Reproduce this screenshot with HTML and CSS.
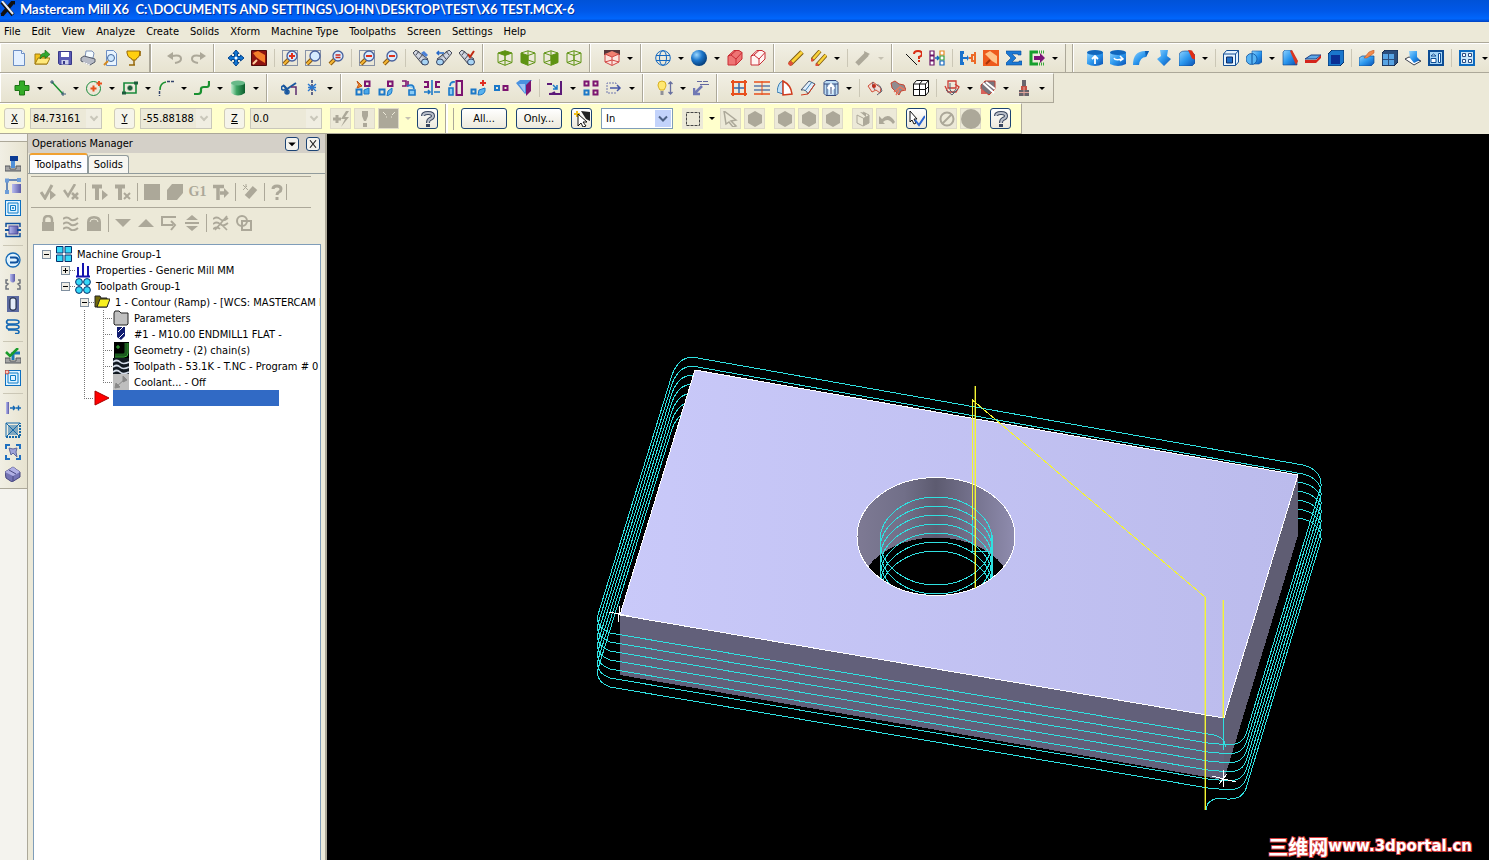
FILE: index.html
```html
<!DOCTYPE html>
<html lang="en">
  <head>
    <meta charset="utf-8">
    <title>Mastercam Mill X6</title>
    <link rel="stylesheet" href="styles.css">
  </head>
  <body>
    <!-- shared gradients and icon parts -->
    <svg class="sprite" aria-hidden="true">
      <defs>
        <linearGradient id="blue" x1="0" y1="0" x2="1" y2="1"><stop offset="0" stop-color="#8fd3ff"/><stop offset=".5" stop-color="#2b97ee"/><stop offset="1" stop-color="#0a4fb0"/></linearGradient>
        <linearGradient id="green" x1="0" x2="1"><stop offset="0" stop-color="#c4ecd0"/><stop offset=".4" stop-color="#3fa565"/><stop offset="1" stop-color="#0c5c2c"/></linearGradient>
        <linearGradient id="violet" x1="0" x2="1"><stop offset="0" stop-color="#b9bcf0"/><stop offset="1" stop-color="#5a5aa8"/></linearGradient>
        <linearGradient id="steel" x1="0" y1="1" x2="1" y2="0"><stop offset="0" stop-color="#5a6070"/><stop offset=".5" stop-color="#d8dde8"/><stop offset="1" stop-color="#4a5060"/></linearGradient>
        <radialGradient id="ball" cx=".35" cy=".3" r=".7"><stop offset="0" stop-color="#9cd8ff"/><stop offset=".5" stop-color="#1d77cc"/><stop offset="1" stop-color="#06407e"/></radialGradient>
        <linearGradient id="top" x1="0" x2="1"><stop offset="0" stop-color="#c9c9f9"/><stop offset="1" stop-color="#bbbbec"/></linearGradient>
        <linearGradient id="wall" x1="0" x2="1"><stop offset="0" stop-color="#7e7a94"/><stop offset=".3" stop-color="#716f88"/><stop offset=".5" stop-color="#5d5b70"/><stop offset="1" stop-color="#8f8cae"/></linearGradient>
      </defs>
      <symbol id="mag" viewBox="0 0 16 16"><path d="M7 9 2 14" stroke="#8a5a10" stroke-width="4"/><path d="M7 9 2 14" stroke="#f7b733" stroke-width="2"/><circle cx="10" cy="6" r="5" fill="#d6ebff" stroke="#48609c" stroke-width="1.300"/></symbol>
      <symbol id="dots" viewBox="0 0 16 16"><path d="M.5.5h15v15H.5z" stroke="#223a70" stroke-dasharray="1 1"/></symbol>
      <symbol id="bino" viewBox="0 0 16 16"><path d="m0 3 3-3 12 9-5 6z" fill="url(#steel)" stroke="#474b58"/><path d="m3 5 3-4M6 9l4-5" stroke="#474b58"/><ellipse cx="12" cy="12" rx="3.500" ry="3" fill="#a8d4f4" stroke="#354464"/></symbol>
      <symbol id="wire" viewBox="0 0 16 16"><path d="M8 .8 15 3v9.500L8 15.300 1 12.500V3zM1 3l7 2.500L15 3M8 5.500v9.800M1 12.500 8 10l7 2.500M8 .8V10" stroke="#5e9313"/></symbol>
      <symbol id="cyl" viewBox="0 0 16 16"><path d="M0 2h16v12q-8 4-16 0z" fill="url(#blue)"/><ellipse cx="8" cy="2.500" rx="8" ry="2.500" fill="#1167bd"/></symbol>
      <symbol id="sq" viewBox="0 0 16 16"><path d="M1.500 9.500h5v5h-5z" stroke="#1b78c8" stroke-width="2"/><path d="M10 1.500h4.500V6H10z" stroke="#7c1470" stroke-width="2"/></symbol>
      <symbol id="hex" viewBox="0 0 16 16"><path d="m8 0 7 4v8l-7 4-7-4V4z" fill="#aca899"/></symbol>
      <symbol id="help" viewBox="0 0 16 16"><path d="M3 5Q3 2 8 2t5 3q0 2-3 3-2 1-2 4" stroke="#39465f" stroke-width="4"/><path d="M3 5Q3 2 8 2t5 3q0 2-3 3-2 1-2 4" stroke="#b9bfca" stroke-width="2"/><path d="M6 13h4v3H6z" fill="#39465f"/></symbol>
      <symbol id="base" viewBox="0 0 16 16"><path d="M0 10h5v3h6v-3h5v5H0z" fill="#a5a5a5" stroke="#55585e"/></symbol>
      <symbol id="page" viewBox="0 0 16 16"><rect x=".5" y=".5" width="15" height="15" fill="#dff2ff" stroke="#0c6fc0"/></symbol>
    </svg>

    <div class="app">
      <header class="titlebar">
        <svg viewBox="0 0 16 16"><path d="m2 1 11 13M13 1 2 14" stroke="#111" stroke-width="4"/><path d="m2 0 11 13" stroke="#e8edf4" stroke-width="2"/><path d="M11 0h4v4zM1 12v3h3z" fill="#111"/></svg>
        <h1>Mastercam Mill X6&nbsp; C:\DOCUMENTS AND SETTINGS\JOHN\DESKTOP\TEST\X6 TEST.MCX-6</h1>
      </header>

      <nav class="menubar">
        <button>File</button>
        <button>Edit</button>
        <button>View</button>
        <button>Analyze</button>
        <button>Create</button>
        <button>Solids</button>
        <button>Xform</button>
        <button>Machine Type</button>
        <button>Toolpaths</button>
        <button>Screen</button>
        <button>Settings</button>
        <button>Help</button>
      </nav>

      <div class="bar full">
        <div class="group first">
          <button aria-label="New"><svg viewBox="0 0 16 16"><path d="M2.500.5h8l3 3v12h-11z" fill="#e4f0ff" stroke="#6c8ec4"/><path d="M10.500.5v3h3" fill="#fff" stroke="#6c8ec4"/></svg></button>
          <button aria-label="Open"><svg viewBox="0 0 16 16"><path d="M1 14V4h5l1 2h6v8z" fill="#f2c21c" stroke="#a07b10"/><path d="m1 14 3-6h12l-3 6z" fill="#ffe97a" stroke="#a07b10"/><path d="M6 9q0-6 5-6V0l5 4.500-5 4V6Q8 6 6 9z" fill="#2fa82f" stroke="#126512" stroke-width=".6"/></svg></button>
          <button aria-label="Save"><svg viewBox="0 0 16 16"><path d="M1.500 1.500h13v13h-12l-1-1z" fill="#5a5ab4" stroke="#383888"/><path d="M4 2h8v5H4z" fill="#fff"/><path d="M4.500 10h7v4.500h-7z" fill="#cfd3ea"/><path d="M6 11h2v3H6z" fill="#383888"/></svg></button>
          <button aria-label="Print"><svg viewBox="0 0 16 16"><path d="m5 8 1-7h6l2 2-1 5z" fill="#f4fbff" stroke="#7d92b8"/><path d="m1 8 3-2 11 3v3l-5 3-9-4z" fill="#b7bbc6" stroke="#555b6a"/><path d="m3 12 7 3" stroke="#fff"/></svg></button>
          <button aria-label="Print preview"><svg viewBox="0 0 16 16"><path d="M3.500.5h7l3 3v12h-10z" fill="#e8f4ff" stroke="#6c8ec4"/><path d="m5 11-4 4" stroke="#d58a20" stroke-width="2"/><circle cx="8" cy="8" r="3.500" fill="#cfe8ff" stroke="#44689c"/></svg></button>
          <button aria-label="Fast track"><svg viewBox="0 0 16 16"><path d="M1 1h13v2q0 4-4 6v1H6V9Q1 7 1 3z" fill="#ffcf10" stroke="#96680a"/><path d="M8 10v5M3 15h6M14 1v5" stroke="#96680a" stroke-width="1.500"/></svg></button>
        </div>
        <div class="group double">
          <button disabled aria-label="Undo"><svg viewBox="0 0 16 16"><path d="m0 6 6-4v8z" fill="#aca899"/><path d="M5 6q9-2 9 3 0 3-6 4" stroke="#aca899" stroke-width="2"/></svg></button>
          <button disabled aria-label="Redo"><svg viewBox="0 0 16 16"><path d="m16 6-6-4v8z" fill="#aca899"/><path d="M11 6Q2 4 2 9q0 3 6 4" stroke="#aca899" stroke-width="2"/></svg></button>
        </div>
        <div class="group">
          <button aria-label="Pan"><svg viewBox="0 0 16 16"><path d="m8 0 3 3.500H9.500V6.500h3V5L16 8l-3.500 3V9.500h-3v3H11L8 16l-3-3.500h1.500v-3h-3V11L0 8l3.500-3v1.500h3v-3H5z" fill="#1176d4" stroke="#06458c" stroke-width="1"/><circle cx="8" cy="8" r="1.500" fill="#fff"/></svg></button>
          <button aria-label="Repaint"><svg viewBox="0 0 16 16"><path d="M.5.5h15v15H.5z" fill="#8f1410" stroke="#4f0c0a"/><path d="m2 3 5-2 7 4v8l-5-3-4-3z" fill="#f47f2c"/><path d="m2 14 4-4" stroke="#ffd0a0" stroke-width="2"/></svg></button>
          <span class="sep"></span>
          <button aria-label="Zoom window"><svg viewBox="0 0 16 16"><use href="#dots"/><use href="#mag"/><path d="M10 3v6M7 6h6" stroke="#e0301a" stroke-width="2"/></svg></button>
          <button aria-label="Zoom target"><svg viewBox="0 0 16 16"><use href="#dots"/><use href="#mag"/></svg></button>
          <button aria-label="Unzoom"><svg viewBox="0 0 16 16"><use href="#mag"/><path d="M7.500 5h5M7.500 7.500h5" stroke="#d0281c" stroke-width="1.400"/></svg></button>
          <span class="sep"></span>
          <button aria-label="Unzoom previous"><svg viewBox="0 0 16 16"><use href="#dots"/><use href="#mag"/><path d="M7 6h6" stroke="#e0301a" stroke-width="2"/></svg></button>
          <button aria-label="Zoom out"><svg viewBox="0 0 16 16"><use href="#mag"/><path d="M7 6h6" stroke="#e0301a" stroke-width="2"/></svg></button>
          <span class="sep"></span>
          <button aria-label="Dynamic view"><svg viewBox="0 0 16 16"><use href="#bino"/><path d="m8 3 3-2 4 4-2 2z" fill="#4a80d8"/></svg></button>
          <button aria-label="Previous view"><svg viewBox="0 0 16 16"><g transform="matrix(-1 0 0 1 16 0)"><use href="#bino"/></g><path d="M8 3H1m2-2L1 3l2 2" stroke="#2468c8" stroke-width="1.500"/></svg></button>
          <button aria-label="Named views"><svg viewBox="0 0 16 16"><use href="#bino"/><path d="m9 4 2 3 4-6" stroke="#c02a12" stroke-width="2"/></svg></button>
        </div>
        <div class="group">
          <button aria-label="Top view"><svg viewBox="0 0 16 16"><path d="M1 3 8 .8 15 3 8 5.500z" fill="#5e9313"/><use href="#wire"/></svg></button>
          <button aria-label="Front view"><svg viewBox="0 0 16 16"><path d="m1 3 7 2.500v9.800l-7-2.800z" fill="#5e9313"/><use href="#wire"/></svg></button>
          <button aria-label="Right view"><svg viewBox="0 0 16 16"><path d="M15 3 8 5.500v9.800l7-2.800z" fill="#5e9313"/><use href="#wire"/></svg></button>
          <button aria-label="Isometric view"><svg viewBox="0 0 16 16"><use href="#wire"/></svg></button>
        </div>
        <div class="group">
          <button aria-label="Construction plane"><svg viewBox="0 0 16 16"><path d="M0 0h16v5H0z" fill="#55363a"/><path d="m1 4 7-3 7 3-7 3z" fill="#f08070"/><path d="M1 4v8l7 4 7-4V4L8 7z" fill="#fbe4de"/><path d="m1 4 7 3 7-3v8l-7 3.500L1 12zM8 7v8M1 12l7-2 7 2" stroke="#d04440"/></svg></button>
          <button class="dd" aria-label="Planes list"></button>
        </div>
        <div class="group">
          <button aria-label="Wireframe"><svg viewBox="0 0 16 16"><circle cx="8" cy="8" r="7.300" stroke="#1468c0"/><ellipse cx="8" cy="8" rx="3.500" ry="7.300" stroke="#1468c0"/><path d="M1 5.500h14M1 10.500h14" stroke="#1468c0"/></svg></button>
          <button class="dd" aria-label="Wireframe list"></button>
          <button aria-label="Shaded"><svg viewBox="0 0 16 16"><circle cx="8" cy="8" r="8" fill="url(#ball)"/></svg></button>
          <button class="dd" aria-label="Shading list"></button>
          <button aria-label="Backside shading"><svg viewBox="0 0 16 16"><path d="m1 6 6-5.500h5l3 2V9l-6 6H1z" fill="#ee7474" stroke="#c82c34"/><path d="m1 6 3-1 5 4 6-6.500M9 9v6M4 5l5-4.500" stroke="#c82c34"/></svg></button>
          <button aria-label="Translucency"><svg viewBox="0 0 16 16"><path d="m1 6 6-5.500h5l3 2V9l-6 6H1z" fill="#fff4f2" stroke="#c82c34"/><path d="m1 6 3-1 5 4 6-6.500M9 9v6M4 5l5-4.500" stroke="#c82c34"/></svg></button>
        </div>
        <div class="group">
          <button aria-label="Delete"><svg viewBox="0 0 16 16"><path d="m2 14 12-12" stroke="#7d5a10" stroke-width="5"/><path d="m4 12 10-10" stroke="#fbd33a" stroke-width="3"/><path d="m1 15 3-3" stroke="#e0503a" stroke-width="4"/></svg></button>
          <button aria-label="Delete duplicates"><svg viewBox="0 0 16 16"><path d="m1 10 8-9M6 15l9-10" stroke="#7d5a10" stroke-width="4"/><path d="m2 9 7-8M7 14l8-9" stroke="#fbd33a" stroke-width="2.500"/><path d="m0 11 2-2M5 16l2-2" stroke="#e0503a" stroke-width="3"/></svg></button>
          <button class="dd" aria-label="Delete list"></button>
          <span class="sep"></span>
          <button disabled aria-label="Undelete"><svg viewBox="0 0 16 16"><path d="m2 14 10-10" stroke="#aca899" stroke-width="5"/><path d="m9 1 6 3-5 3z" fill="#aca899"/></svg></button>
          <button class="dd off" disabled aria-label="Undelete list"></button>
        </div>
        <div class="group">
          <button aria-label="Analyze entity"><svg viewBox="0 0 16 16"><path d="m0 4 11 11" stroke="#111"/><path d="M8 4q0-3 4-3t4 3q0 2-3 3v2" stroke="#d82c14" stroke-width="2"/><path d="M12 10h2v2h-2z" fill="#d82c14"/></svg></button>
          <button aria-label="Compare"><svg viewBox="0 0 16 16"><path d="M1 1h4v4H1zM1 6h4v4H1zM1 11h4v4H1z" fill="#fff" stroke="#6c1468" stroke-width="1.200"/><path d="M6 8h4M8 6l2 2-2 2" stroke="#1468c0" stroke-width="1.400"/><path d="M11 1h4v4h-4z" fill="#fff" stroke="#e88820" stroke-width="1.200"/><path d="M11 6h4v4h-4z" fill="#fff" stroke="#38a040" stroke-width="1.200"/><path d="M11 11h4v4h-4z" fill="#fff" stroke="#1468c0" stroke-width="1.200"/></svg></button>
          <span class="sep"></span>
          <button aria-label="Analyze distance"><svg viewBox="0 0 16 16"><path d="M0 1h4v3H3v3h4V5l2 3-2 3V9H3v3h1v3H0z" fill="#1a72cc"/><path d="M15 2v12M15 5h-3v6h3M12 8H9" stroke="#ec6a28" stroke-width="2"/></svg></button>
          <button aria-label="Repaint screen"><svg viewBox="0 0 16 16"><path d="M0 0h16v16H0z" fill="#ee5a1c"/><path d="m2 4 5-3 7 5v8l-5-3z" fill="#ffc48a"/><path d="m3 14 4-4" stroke="#a63208" stroke-width="2"/></svg></button>
          <button aria-label="Statistics"><svg viewBox="0 0 16 16"><path d="M0 1h15v4h-3V4H6l4 4-4 4h7v-1h3v4H0v-2l5-5-5-5z" fill="#1a78d4" stroke="#0a4a94" stroke-width=".6"/></svg></button>
          <button aria-label="Run add-in"><svg viewBox="0 0 16 16"><path d="M9 2H2v12h7" stroke="#16a02c" stroke-width="3"/><path d="M5 6h6V3l5 5-5 5v-3H5z" fill="#7a1478"/><path d="M10 2h6M10 14h6" stroke="#38a83a" stroke-dasharray="1 1" stroke-width="3"/></svg></button>
          <button class="dd" aria-label="Add-in list"></button>
        </div>
        <div class="group last">
          <button aria-label="Extrude"><svg viewBox="0 0 16 16"><use href="#cyl"/><path d="M8 14V6M5 9l3-3 3 3" stroke="#fff" stroke-width="1.800"/></svg></button>
          <button aria-label="Revolve"><svg viewBox="0 0 16 16"><use href="#cyl"/><path d="M4 8q1 3 8 1M10 6l3 3-3 2" stroke="#fff" stroke-width="1.500"/></svg></button>
          <button aria-label="Sweep"><svg viewBox="0 0 16 16"><path d="M0 15Q0 1 12 1h4l-3 6q-6 0-7 8z" fill="url(#blue)"/><path d="M12 1h4l-3 6z" fill="#0d5cb0"/></svg></button>
          <button aria-label="Loft"><svg viewBox="0 0 16 16"><path d="M4 0h8l-1 6 4 3-7 7-7-7 4-3z" fill="url(#blue)"/></svg></button>
          <button aria-label="Fillet"><svg viewBox="0 0 16 16"><path d="M0 6q0-5 6-5h6l4 4v8l-3 3H0z" fill="url(#blue)" stroke="#0a3f86" stroke-width=".6"/><path d="m9 0 4 .5 3 5v4l-3-1z" fill="#e02c14"/></svg></button>
          <button class="dd" aria-label="Fillet list"></button>
          <span class="sep"></span>
          <button aria-label="Shell"><svg viewBox="0 0 16 16"><path d="m.5 4 3-3.500h12V12l-3 3.500H.5zM.5 4h12v11.500M12.500 4l3-3.500" fill="#e4f3ff" stroke="#154f94"/><path d="M3.500 7h6v6h-6z" fill="#1f6fc8" stroke="#0d2c64"/></svg></button>
          <button aria-label="Boolean"><svg viewBox="0 0 16 16"><path d="M6 1h10v11l-3 2H6z" fill="url(#blue)" stroke="#0a4f9a" stroke-width=".6"/><circle cx="5.500" cy="9" r="5.500" fill="#58b4f4" stroke="#0a4f9a" stroke-width=".8"/><path d="M6 4v10" stroke="#0a4f9a"/></svg></button>
          <button class="dd" aria-label="Boolean list"></button>
          <button aria-label="Draft faces"><svg viewBox="0 0 16 16"><path d="M1 2 3 0h6l6 11v4H1z" fill="url(#blue)" stroke="#0a3f86" stroke-width=".6"/><path d="m8 1 2-1 6 11-2 4z" fill="#d83620"/></svg></button>
          <button aria-label="Trim solid"><svg viewBox="0 0 16 16"><path d="m0 9 6-4h10l-5 4z" fill="#5ca8e8" stroke="#1a3f84"/><path d="M0 10h11l5-5v3l-5 5H0z" fill="#d4241c"/></svg></button>
          <button aria-label="Thicken"><svg viewBox="0 0 16 16"><path d="m0 4 4-4h12v12l-4 4H0z" fill="#1a76cc" stroke="#052a60"/><path d="M3 5h9v9H3z" fill="#0a2f94"/></svg></button>
          <span class="sep"></span>
          <button aria-label="Remove faces"><svg viewBox="0 0 16 16"><path d="m0 8 3-2h12v7l-3 3H0z" fill="url(#blue)" stroke="#0a4a94" stroke-width=".7"/><path d="m5 8 5-6 5-2v3l-7 5z" fill="#f28a4c" stroke="#b44a14" stroke-width=".5"/></svg></button>
          <button aria-label="Cube"><svg viewBox="0 0 16 16"><path d="m0 3 3-3h13v12l-4 4H0z" fill="#2c4e7c" stroke="#10264c"/><path d="M1 4h5v5H1zM7 4h5v5H7zM1 10h5v5H1zM7 10h5v5H7z" fill="#58a4e4"/></svg></button>
          <button aria-label="Solid surfaces"><svg viewBox="0 0 16 16"><path d="m0 9 4-2 12 4-7 4z" fill="#fff" stroke="#3a3f4c"/><path d="M4 1h8v6l3 3-6 3-4-5z" fill="url(#blue)"/></svg></button>
          <button aria-label="Solid layout"><svg viewBox="0 0 16 16"><rect x="1" y="1" width="14" height="14" fill="#a4d4f6" stroke="#0c4c94" stroke-width="2"/><path d="m3 6 2.500-2L8 6H3zM3 8.500h5v4H3zM10.500 3.500h2v9h-2z" fill="#fff" stroke="#0c4c94"/></svg></button>
          <span class="sep"></span>
          <button aria-label="Solid views"><svg viewBox="0 0 16 16"><rect x="1" y="1" width="14" height="14" fill="#c9e6fa" stroke="#0c6ac0" stroke-width="2"/><path d="M3.500 3.500h3v3h-3zM9.500 3.500h3v3h-3zM3.500 9.500h3v3h-3zM9.500 9.500h3v3h-3z" fill="#fff" stroke="#2a4c84"/></svg></button>
          <button class="dd" aria-label="Views list"></button>
        </div>
      </div>

      <div class="bar second">
        <div class="group first wide">
          <button aria-label="Point"><svg viewBox="0 0 16 16"><path d="M5.500 1h5v4.500H15v5h-4.500V15h-5v-4.500H1v-5h4.500z" fill="#34ac28" stroke="#1c7414"/></svg></button>
          <button class="dd" aria-label="Point list"></button>
          <button aria-label="Line"><svg viewBox="0 0 16 16"><path d="m2 2 11 12" stroke="#1a9030" stroke-width="1.500"/><path d="M0 2h4M2 0v4M11 14h5M13 11.500v4.500" stroke="#3a5878"/></svg></button>
          <button class="dd" aria-label="Line list"></button>
          <button aria-label="Arc"><svg viewBox="0 0 16 16"><circle cx="7.500" cy="8.500" r="7" stroke="#1a8a3c"/><path d="M7.500 5.500v6M4.500 8.500h6M13 1v5M10.500 3.500H16" stroke="#e8501c" stroke-width="2"/></svg></button>
          <button class="dd" aria-label="Arc list"></button>
          <button aria-label="Rectangle"><svg viewBox="0 0 16 16"><path d="M2 3h12v10H2z" stroke="#1a8a3c" stroke-width="1.600"/><path d="M8 5.500v5M5.500 8h5M0 13h4M12 3h4" stroke="#1c5c3c" stroke-width="3"/></svg></button>
          <button class="dd" aria-label="Rectangle list"></button>
          <button aria-label="Fillet"><svg viewBox="0 0 16 16"><path d="M2 10q0-7 6-8" stroke="#1a9030" stroke-width="1.500"/><path d="M9 1.500h7M1.500 11v5" stroke="#33436c" stroke-dasharray="3 1" stroke-width="1.500"/></svg></button>
          <button class="dd" aria-label="Fillet list"></button>
          <button aria-label="Spline"><svg viewBox="0 0 16 16"><path d="M0 14h4q3 0 3-3V9q0-2 3-2h3q2 0 2-3V1" stroke="#1a9030" stroke-width="2.200"/></svg></button>
          <button class="dd" aria-label="Spline list"></button>
          <button aria-label="Primitive"><svg viewBox="0 0 16 16"><path d="M1 3h14v10q-7 5-14 0z" fill="url(#green)"/><ellipse cx="8" cy="3" rx="7" ry="2.500" fill="#67b988"/></svg></button>
          <button class="dd" aria-label="Primitive list"></button>
        </div>
        <div class="group">
          <button aria-label="Trim"><svg viewBox="0 0 16 16"><path d="m2 5 4 4 9-6M6 9v5" stroke="#1a58a0" stroke-width="2"/><circle cx="2.500" cy="8" r="2" stroke="#1a58a0" stroke-width="1.500"/><circle cx="6" cy="12" r="2" stroke="#1a58a0" stroke-width="1.500"/><path d="M10 7h5v8" stroke="#5c2c70" stroke-width="1.500"/></svg></button>
          <button aria-label="Break"><svg viewBox="0 0 16 16"><path d="M8 0v16" stroke="#303c70" stroke-dasharray="3 1" stroke-width="1.500"/><path d="m4 4 8 7M12 4l-8 7M4 7.500h8" stroke="#2a78d0" stroke-width="1.500"/></svg></button>
          <button class="dd" aria-label="Break list"></button>
        </div>
        <div class="group">
          <button aria-label="Dynamic xform"><svg viewBox="0 0 16 16"><use href="#sq"/><path d="m2 1 5 5-5 2q3-3 0-7z" fill="#f08a20" stroke="#c05010"/><path d="m9 10 5-2v6H9z" fill="#4aa8ea" stroke="#1b78c8"/></svg></button>
          <button aria-label="Translate"><svg viewBox="0 0 16 16"><use href="#sq"/><path d="M14 8v3q0 3-3 4l-2 1 1-5z" fill="#58b2ee" stroke="#1b78c8"/></svg></button>
          <button aria-label="Translate 3D"><svg viewBox="0 0 16 16"><path d="M1 1h4v5H1M7 1v6" stroke="#7c1470" stroke-width="1.600"/><path d="M8 10h6v5H8zM6 6q7-3 7 3" fill="#8acbf4" stroke="#1b78c8" stroke-width="1.600"/></svg></button>
          <button aria-label="Mirror"><svg viewBox="0 0 16 16"><path d="M0 2h4v5H0M16 2h-4v5h4" stroke="#7c1470" stroke-width="2"/><path d="M8 0v15M0 12h6M10 12h6M4 10l2 2-2 2" stroke="#1b78c8" stroke-width="1.600"/></svg></button>
          <button aria-label="Rotate"><svg viewBox="0 0 16 16"><path d="M9.500 1H15v14H9.500z" stroke="#7c1470" stroke-width="2"/><path d="M2 8h4v7H2zM3 6q0-5 5-4" fill="#8acbf4" stroke="#1b78c8" stroke-width="1.600"/></svg></button>
          <button aria-label="Scale"><svg viewBox="0 0 16 16"><path d="M1.500 9.500h4v4h-4z" stroke="#1b78c8" stroke-width="2"/><path d="M13 0v6M10 3h6" stroke="#e02c20" stroke-width="2"/><path d="m8 15 1-5 6-2v3q-1 4-7 4z" fill="#58b2ee" stroke="#1b78c8"/></svg></button>
          <button aria-label="Offset"><svg viewBox="0 0 16 16"><path d="M2 6h4v4H2z" stroke="#1b78c8" stroke-width="2"/><path d="M10.500 6h4v4h-4z" stroke="#7c1470" stroke-width="2"/></svg></button>
          <button aria-label="Project"><svg viewBox="0 0 16 16"><path d="M0 3 4 0h12l-4 5v6l-3 3z" fill="#4a92e0"/><path d="m10 5 5-5v11l-5 5z" fill="#7c1470"/><path d="m3 4 6 9V4z" fill="#9cc4f4"/></svg></button>
          <span class="sep"></span>
          <button aria-label="Drag"><svg viewBox="0 0 16 16"><path d="M0 4h5M14 1v13H2q3 0 6-2" stroke="#5c1a78" stroke-width="2"/><path d="m6 5 4 4M10 5v4H6" stroke="#1b78c8" stroke-width="1.500"/></svg></button>
          <button class="dd" aria-label="Drag list"></button>
          <button aria-label="Nesting"><svg viewBox="0 0 16 16"><path d="M1.500 1.500h4v4h-4zM10.500 1.500h4v4h-4zM10.500 10.500h4v4h-4z" stroke="#7c1470" stroke-width="2"/><path d="M1.500 10.500h4v4h-4z" stroke="#1b78c8" stroke-width="2"/></svg></button>
          <button aria-label="Stretch"><svg viewBox="0 0 16 16"><path d="M10 4V3H1v10h9v-1" stroke="#7078b0" stroke-dasharray="2 1"/><path d="M4 8h10M11 5l3 3-3 3" stroke="#4858a8" stroke-width="1.500"/></svg></button>
          <button class="dd" aria-label="Stretch list"></button>
        </div>
        <div class="group">
          <button aria-label="Blank"><svg viewBox="0 0 16 16"><path d="M5 1q4 0 4 4 0 2-2 5H3Q1 7 1 5q0-4 4-4z" fill="#ffe870" stroke="#d8b020"/><path d="M3.500 11h3v4h-3z" fill="#8f9098"/><path d="M13.500 2v12M11.500 4l2-2 2 2M11.500 12l2 2 2-2" stroke="#6870a0" stroke-width="1.300"/></svg></button>
          <button class="dd" aria-label="Blank list"></button>
          <button aria-label="Note"><svg viewBox="0 0 16 16"><path d="M4 1.500h5M10 1.500h5M7 4.500h9" stroke="#6468a0"/><path d="m9 6-8 8M1 8v6h6" stroke="#7078b4" stroke-width="2.500"/></svg></button>
        </div>
        <div class="group end">
          <button aria-label="Surface net"><svg viewBox="0 0 16 16"><path d="M0 2h16M0 14h16M2 0v16M14 0v16" stroke="#e8501c" stroke-width="2"/><path d="M3 8h10M8 3v10" stroke="#3868a8" stroke-width="1.500"/></svg></button>
          <button aria-label="Surface ruled"><svg viewBox="0 0 16 16"><path d="M0 2h16M0 14h16" stroke="#e8501c" stroke-width="1.500"/><path d="M0 6h16M0 10h16" stroke="#5878a8" stroke-width="1.500"/><path d="M8 1v14" stroke="#e8501c"/></svg></button>
          <button aria-label="Revolved surface"><svg viewBox="0 0 16 16"><path d="M0 12Q1 2 6 1v13z" fill="#bfe2f8" stroke="#3a7cb0"/><path d="M6 1q8 4 9 13l-9 1z" fill="#fff" stroke="#d03a1c" stroke-width="1.500"/></svg></button>
          <button aria-label="Swept surface"><svg viewBox="0 0 16 16"><path d="m1 10 8-9 6 3-7 10q-2-5-7-4z" fill="#dfeefb" stroke="#44546c"/><path d="m1 15 7-1 7-10" stroke="#d03a1c"/><path d="m5 11 7-9" stroke="#3a7cb0"/></svg></button>
          <button aria-label="Fence surface"><svg viewBox="0 0 16 16"><path d="M3 .5h10l2 2v11l-2 2H3l-2-2v-11z" fill="#bcdcf4" stroke="#34487c"/><path d="M1 4h14M4 4v11M12 4v11" stroke="#34487c"/><path d="M8 14V6M5 9l3-4 3 4" stroke="#fff" stroke-width="3"/><path d="M8 14V7" stroke="#34487c"/></svg></button>
          <button class="dd" aria-label="Surface list"></button>
          <span class="sep"></span>
          <button aria-label="Trim surface"><svg viewBox="0 0 16 16"><path d="m1 6 5-4 4 3 4 3-1 5-4-3-4 2z" fill="#f2dcd6" stroke="#d05038"/><path d="M6 2q-2 4 2 8M10 5q3-1 5 6l-5 4" stroke="#5c6070"/><circle cx="7" cy="6" r="2" fill="#c02c1c"/></svg></button>
          <button aria-label="Fill holes"><svg viewBox="0 0 16 16"><path d="m1 3 4-2 4 3 5 1 2 5-5 1-2 4-4-4-3-3z" fill="#908c90" stroke="#c84430"/><path d="m4 12 6-5 5 3M6 15l3-5" stroke="#e87860" stroke-width="1.500"/></svg></button>
          <button aria-label="Surface cube"><svg viewBox="0 0 16 16"><path d="m.5 4 3-3.500h12V12l-3 3.500H.5z" fill="#fff" stroke="#111"/><path d="M.5 4h12v11.500M12.500 4l3-3.500M6.500 4v11M.5 9.500h12l3-3M6.500 4l3-3.500" stroke="#111"/></svg></button>
          <span class="sep"></span>
          <button aria-label="Pocket surface"><svg viewBox="0 0 16 16"><path d="M4 1h8v7H4zM1 6l3 6h8l3-5-4-3" stroke="#cc3c34" stroke-width="1.300"/><path d="M6 3v7l3 3 3-4M2 10l6 5 6-6" stroke="#5c6070"/></svg></button>
          <button class="dd" aria-label="Pocket list"></button>
          <button aria-label="Mesh"><svg viewBox="0 0 16 16"><path d="m1 5 4-4h10v8l-6 6-8-6z" fill="#78747c" stroke="#c43c30"/><path d="m3 3 11 10M6 2l9 7" stroke="#fff" stroke-width="2"/><path d="M1 14h6l-6-6z" fill="#d8625a"/></svg></button>
          <button class="dd" aria-label="Mesh list"></button>
          <button aria-label="Stamp"><svg viewBox="0 0 16 16"><path d="M6 0h4v6H6z" fill="#68646c"/><path d="M5 6h6v4H5z" fill="#c45044"/><path d="M3 10h10v6H3z" fill="#67636b"/><path d="M3 12.500h10M8 7v9" stroke="#e0a49c"/></svg></button>
          <button class="dd" aria-label="Stamp list"></button>
        </div>
      </div>

      <div class="bar ribbon">
        <div class="autocursor">
          <button class="axis" aria-label="Lock X"><u>X</u></button>
          <div class="combo"><input type="text" value="84.73161" aria-label="X"><button class="drop" disabled aria-label="X history"></button></div>
          <button class="axis" aria-label="Lock Y"><u>Y</u></button>
          <div class="combo"><input type="text" value="-55.88188" aria-label="Y"><button class="drop" disabled aria-label="Y history"></button></div>
          <button class="axis" aria-label="Lock Z"><u>Z</u></button>
          <div class="combo"><input type="text" value="0.0" aria-label="Z"><button class="drop" disabled aria-label="Z history"></button></div>
          <div class="flats">
            <button class="flat" disabled aria-label="Fast point"><svg viewBox="0 0 16 16"><path d="M0 8h8M4 4v8" stroke="#aca899" stroke-width="3"/><path d="m13 0-5 8h4l-4 8 8-10h-4l4-6z" fill="#aca899"/></svg></button>
            <button class="flat" disabled aria-label="Settings"><svg viewBox="0 0 16 16"><path d="M5 0h6v5l-2 5H7L5 5zM6 12h4v4H6z" fill="#aca899"/></svg></button>
            <button class="flat dark" disabled aria-label="Override"><svg viewBox="0 0 16 16"><path d="m2 1 3 3M14 1l-3 3M5 6h1M10 6h1" stroke="#ece9d8"/></svg></button>
            <button class="dd off" disabled aria-label="Override list"></button>
          </div>
          <button class="xp" aria-label="Help"><svg viewBox="0 0 16 16"><use href="#help"/></svg></button>
        </div>
        <div class="selection">
          <span class="grip"></span>
          <button class="xp text">All...</button>
          <button class="xp text">Only...</button>
          <button class="xp" aria-label="Select mode"><svg viewBox="0 0 16 16"><path d="m7 0 9 1v9l-4-2z" fill="#222"/><path d="M3 0v6M0 3h6" stroke="#f2c01c" stroke-width="2"/><path d="m4 3 9 8H9l3 4-3 1-2-4-3 3z" fill="#fff" stroke="#111"/></svg></button>
          <div class="pick"><select aria-label="Window selection"><option>In</option></select><svg viewBox="0 0 16 16"><path d="m4 6 4 4 4-4" stroke="#4d6185" stroke-width="2"/></svg></div>
          <div class="flats">
            <button class="plain" aria-label="Window"><svg viewBox="0 0 16 16"><path d="M1.500 1.500h13v13h-13z" stroke="#444" stroke-dasharray="3 1"/></svg></button>
            <button class="dd" aria-label="Window list"></button>
            <button class="flat" disabled aria-label="Verify"><svg viewBox="0 0 16 16"><path d="m1 0 12 9-5 1 5 5-3 1-4-5-3 2z" stroke="#aca899" stroke-width="1.500"/></svg></button>
            <button class="flat" disabled aria-label="Solid body"><svg viewBox="0 0 16 16"><use href="#hex"/></svg></button>
          </div>
          <div class="flats">
            <button class="flat" disabled aria-label="Edge"><svg viewBox="0 0 16 16"><use href="#hex"/></svg></button>
            <button class="flat" disabled aria-label="Face"><svg viewBox="0 0 16 16"><use href="#hex"/></svg></button>
            <button class="flat" disabled aria-label="Body"><svg viewBox="0 0 16 16"><use href="#hex"/></svg></button>
          </div>
          <div class="flats">
            <button class="flat" disabled aria-label="From back"><svg viewBox="0 0 16 16"><path d="m8 1 6 3v8l-6 3-6-3V4l6 3" stroke="#aca899"/><path d="m8 7 6-3v8l-6 3zM5 1l6 1v4z" fill="#aca899"/></svg></button>
            <button class="flat" disabled aria-label="Last"><svg viewBox="0 0 16 16"><path d="M0 5v8h6l-2-2q5-5 10 2l2-2Q10 1 3 8z" fill="#aca899"/></svg></button>
          </div>
          <button class="xp" aria-label="Validate"><svg viewBox="0 0 16 16"><path d="m1 0 7 8H5l2 4-2 1-2-4-2 2z" fill="#fff" stroke="#111"/><path d="m6 9 4 5 6-9" stroke="#2a64d0" stroke-width="2"/></svg></button>
          <div class="flats">
            <button class="flat" disabled aria-label="Clear"><svg viewBox="0 0 16 16"><circle cx="8" cy="8" r="6.500" stroke="#aca899" stroke-width="2"/><path d="M13 3 3 13" stroke="#aca899" stroke-width="2"/></svg></button>
            <button class="flat" disabled aria-label="End selection"><svg class="full-size" viewBox="0 0 16 16"><circle cx="8" cy="8" r="8" fill="#aca899"/></svg></button>
          </div>
          <button class="xp" aria-label="Selection help"><svg viewBox="0 0 16 16"><use href="#help"/></svg></button>
        </div>
      </div>

      <div class="work">
        <aside class="sidebar">
          <div class="tools">
            <button aria-label="Contour"><svg viewBox="0 0 16 16"><use href="#base"/><path d="M6 5h4v7H6z" fill="#5090d8"/><path d="M5 0h8v5H5z" fill="#0c3c94"/></svg></button>
            <button aria-label="Drill"><svg viewBox="0 0 16 16"><path d="M2 15V2h12" stroke="#3c68ac" stroke-width="1.500"/><path d="M0 .5h4v4H0zM12 0h4v4h-4zM0 12h4v4H0z" fill="#6c9cd8"/><rect x="7" y="6" width="9" height="9" fill="url(#violet)"/></svg></button>
            <button aria-label="Pocket"><svg viewBox="0 0 16 16"><use href="#page"/><path d="M3 3h10v10H3zM5.500 5.500h5v5h-5zM7.500 7.500h1v1h-1z" stroke="#0c7cc8"/></svg></button>
            <button aria-label="Face"><svg viewBox="0 0 16 16"><path d="M15 5V1.500H1V5M1 11v3.500h14V11" stroke="#10509c" stroke-width="1.500"/><rect x="4" y="4" width="9" height="8" fill="url(#violet)" stroke="#4848a0"/><path d="M0 8h4M12 8h4" stroke="#10509c" stroke-width="2"/></svg></button>
            <span class="sep"></span>
            <button aria-label="Circle mill"><svg viewBox="0 0 16 16"><circle cx="8" cy="8" r="7" fill="#dff2ff" stroke="#1468b4" stroke-width="1.300"/><path d="M5 5.500h5q3 0 3 2.500t-3 2.500H5" stroke="#10509c" stroke-width="2"/></svg></button>
            <button aria-label="Thread mill"><svg viewBox="0 0 16 16"><path d="M5 0h5v7q-2 3-5 0z" fill="url(#violet)"/><path d="M3 6H1v3l2 1-2 2v3h3M13 6h2v3l-2 1 2 2v3h-3" stroke="#70747c" stroke-width="1.500"/></svg></button>
            <button aria-label="Slot mill"><svg viewBox="0 0 16 16"><rect x="2" y="0" width="12" height="16" fill="#5c6aa0"/><rect x="5" y="2" width="6" height="12" rx="2" fill="#e4edf8" stroke="#111c34"/></svg></button>
            <button aria-label="Helix bore"><svg viewBox="0 0 16 16"><path d="M2 2h8q4 0 4 2t-4 2H3M3 7h7q4 0 4 2t-4 2H3M3 12h7q4 0 4 2t-4 1.500M3 2Q0 4 3 6M3 7q-3 2 0 4" stroke="#1468b4" stroke-width="1.600"/></svg></button>
            <span class="sep"></span>
            <button aria-label="High speed"><svg viewBox="0 0 16 16"><use href="#base"/><path d="M8 4v8M8 5h7" stroke="#1878b8" stroke-width="3"/><path d="m1 4 4 4 8-8" stroke="#1a9c2c" stroke-width="2.500"/></svg></button>
            <button aria-label="Area mill"><svg viewBox="0 0 16 16"><use href="#page"/><path d="M3 3h10v10H3zM5.500 5.500h5v5h-5z" stroke="#0c7cc8"/><circle cx="2" cy="2" r="2" fill="#f4c8c0" stroke="#d0402c"/></svg></button>
            <span class="sep"></span>
            <button aria-label="Point toolpath"><svg viewBox="0 0 16 16"><path d="M1 2h3v12H1z" fill="url(#violet)"/><path d="M5 8h5M8 6l2 2-2 2M11 8h5M13.500 5.500v5" stroke="#1468b4" stroke-width="1.400"/></svg></button>
            <button aria-label="Project toolpath"><svg viewBox="0 0 16 16"><path d="M1 1h14L1 15z" stroke="#1468a8"/><path d="M4 4h8v8H4zM1 1l14 14M6 6h4v4H6z" stroke="#1468a8"/><path d="M1 15h14V1" stroke="#1468a8" stroke-dasharray="2 1" stroke-width="2"/></svg></button>
            <button aria-label="Trim toolpath"><svg viewBox="0 0 16 16"><path d="M1 5V1h4M11 1h4v4M15 11v4h-4M5 15H1v-4" stroke="#2070c0" stroke-width="2"/><path d="m4 4 2 7 2-2 4 4-1-5 1-4-4 1z" fill="#a0a4d8" stroke="#60689c"/></svg></button>
            <button aria-label="Solid toolpath"><svg viewBox="0 0 16 16"><path d="m0 6 8-5 7 5v5l-8 5-6-4z" fill="#7474b4" stroke="#484880"/><path d="m0 6 8-5 7 5-7 4z" fill="#b0b0e4"/><path d="m4 4 7 4M8 10v5" stroke="#484880"/></svg></button>
          </div>
        </aside>

        <section class="manager">
          <div class="caption">
            <h2>Operations Manager</h2>
            <button class="mini" aria-label="Options"><svg viewBox="0 0 16 16"><path d="M3 6h10l-5 5z" fill="#000"/></svg></button>
            <button class="mini" aria-label="Close"><svg viewBox="0 0 16 16"><path d="m4 3 8 10M12 3 4 13" stroke="#222" stroke-width="1.600"/></svg></button>
          </div>
          <div class="tabs">
            <button class="tab active">Toolpaths</button>
            <button class="tab">Solids</button>
          </div>
          <div class="ops">
            <button disabled aria-label="Select all"><svg viewBox="0 0 16 16"><path d="m1 8 4 6 7-13" stroke="#aca899" stroke-width="3"/><path d="m10 6 6 5-6 5z" fill="#aca899"/></svg></button>
            <button disabled aria-label="Select dirty"><svg viewBox="0 0 16 16"><path d="m1 6 4 6 7-12M9 9l6 6M15 9l-6 6" stroke="#aca899" stroke-width="2.500"/></svg></button>
            <span class="sep"></span>
            <button disabled aria-label="Regenerate selected"><svg viewBox="0 0 16 16"><path d="M0 2.500h10M5 2v14" stroke="#aca899" stroke-width="4"/><path d="m10 6 6 5-6 5z" fill="#aca899"/></svg></button>
            <button disabled aria-label="Regenerate dirty"><svg viewBox="0 0 16 16"><path d="M0 2.500h10M5 2v14" stroke="#aca899" stroke-width="4"/><path d="m9 9 6 6M15 9l-6 6" stroke="#aca899" stroke-width="2"/></svg></button>
            <span class="sep"></span>
            <button disabled aria-label="Backplot"><svg viewBox="0 0 16 16"><path d="M0 0h16v16H0z" fill="#aca899"/></svg></button>
            <button disabled aria-label="Verify"><svg viewBox="0 0 16 16"><path d="m0 6 5-6h11v9l-6 7H0z" fill="#aca899"/></svg></button>
            <button class="g1" disabled>G1</button>
            <button disabled aria-label="High feed"><svg viewBox="0 0 16 16"><path d="M0 2.500h11M5 2v14M7 9h5" stroke="#aca899" stroke-width="3.500"/><path d="m11 4 5 5-5 5z" fill="#aca899"/></svg></button>
            <span class="sep"></span>
            <button disabled aria-label="Delete all"><svg viewBox="0 0 16 16"><path d="m5 13 8-9" stroke="#aca899" stroke-width="6"/><path d="m1 1 5 5M1 6l4-4M4 0v3" stroke="#aca899"/></svg></button>
            <span class="sep"></span>
            <button disabled aria-label="Help"><svg viewBox="0 0 16 16"><path d="M2 5q0-3 4-3t4 3q0 2-2 3-2 1-2 3" stroke="#aca899" stroke-width="3"/><path d="M4.500 13h3v3h-3zM15 0h1v16h-1z" fill="#aca899"/></svg></button>
          </div>
          <div class="ops">
            <button disabled aria-label="Lock"><svg viewBox="0 0 16 16"><path d="M2 7h12v9H2z" fill="#aca899"/><path d="M4 8V5q0-4 4-4t4 4v3" stroke="#aca899" stroke-width="2.500"/></svg></button>
            <button disabled aria-label="Toggle display"><svg viewBox="0 0 16 16"><path d="M0 4q4-3 7 0t8-1M0 9q4-3 7 0t8-1M0 14q4-3 7 0t8-1" stroke="#aca899" stroke-width="2"/></svg></button>
            <button disabled aria-label="Toggle posting"><svg viewBox="0 0 16 16"><path d="M1 16V7q0-6 7-6t7 6v9z" fill="#aca899"/><path d="M4 7q0-3 4-3t4 3" stroke="#ece9d8"/></svg></button>
            <span class="sep"></span>
            <button disabled aria-label="Move down"><svg viewBox="0 0 16 16"><path d="M0 4h16l-8 8z" fill="#aca899"/></svg></button>
            <button disabled aria-label="Move up"><svg viewBox="0 0 16 16"><path d="M0 12h16L8 4z" fill="#aca899"/></svg></button>
            <button disabled aria-label="Position"><svg viewBox="0 0 16 16"><path d="M15 2H1v8h11M10 6l4 4-4 5" stroke="#aca899" stroke-width="2"/></svg></button>
            <button disabled aria-label="Scroll"><svg viewBox="0 0 16 16"><path d="m8 0 6 5H2zM8 16l6-5H2zM1 7h14v2H1z" fill="#aca899"/></svg></button>
            <span class="sep"></span>
            <button disabled aria-label="Only display selected"><svg viewBox="0 0 16 16"><path d="M0 4q4-3 7 0t8-1M0 9q4-3 7 0t8-1M0 14q4-3 7 0M14 1 2 15M7 8l7 7" stroke="#aca899" stroke-width="1.700"/></svg></button>
            <button disabled aria-label="Only display geometry"><svg viewBox="0 0 16 16"><circle cx="6" cy="6" r="5" stroke="#aca899" stroke-width="2"/><path d="M6 6h9v9H6z" stroke="#aca899" stroke-width="2"/></svg></button>
          </div>
          <div class="tree">
            <div class="row"><i class="box minus"></i><svg viewBox="0 0 16 16"><path d="M.5.5h6.500V7H.5zM9 .5h6.500V7H9zM.5 9h6.500v6.500H.5zM9 9h6.500v6.500H9z" fill="#35d8f8" stroke="#06306c"/></svg><span>Machine Group-1</span></div>
            <div class="row"><i></i><i class="box plus"></i><svg viewBox="0 0 16 16"><path d="M3 15V5M8 15V1M13 15V4M1 14.500h14" stroke="#1414b0" stroke-width="2"/></svg><span>Properties - Generic Mill MM</span></div>
            <div class="row"><i></i><i class="box minus"></i><svg viewBox="0 0 16 16"><g fill="#35d8f8" stroke="#06306c"><circle cx="4" cy="4" r="3.400"/><circle cx="12" cy="4" r="3.400"/><circle cx="4" cy="12" r="3.400"/><circle cx="12" cy="12" r="3.400"/></g></svg><span>Toolpath Group-1</span></div>
            <div class="row"><i></i><i></i><i class="box minus"></i><svg viewBox="0 0 16 16"><path d="M1 13V2h5l1 2h6v9z" fill="#706808" stroke="#222"/><path d="m3 13 3-8h10l-3 8z" fill="#f8f020" stroke="#222"/></svg><span>1 - Contour (Ramp) - [WCS: MASTERCAM I</span></div>
            <div class="row"><i></i><i></i><i class="line"></i><i class="tee"></i><svg viewBox="0 0 16 16"><path d="M1 14V3l1-2h4l2 2h7v11l-1 1H2z" fill="#c0c0c0" stroke="#222"/></svg><span>Parameters</span></div>
            <div class="row"><i></i><i></i><i class="line"></i><i class="tee"></i><svg viewBox="0 0 16 16"><path d="M4 1h8v9l-4 4-4-3z" fill="#101c70"/><path d="m5 6 5-5M6 12l5-5" stroke="#fff"/></svg><span>#1 - M10.00 ENDMILL1 FLAT -</span></div>
            <div class="row"><i></i><i></i><i class="line"></i><i class="tee"></i><svg viewBox="0 0 16 16"><path d="M1 0h15v16H1z" fill="#000"/><path d="M13 1v9q0 3-3 3H2" stroke="#1c5c20" stroke-width="3"/><path d="M15 1v10q0 4-4 4H2M5 3v4M3 5h4" stroke="#3cb83c"/></svg><span>Geometry - (2) chain(s)</span></div>
            <div class="row"><i></i><i></i><i class="line"></i><i class="tee"></i><svg viewBox="0 0 16 16"><path d="M0 0h16v16H0z" fill="#101820"/><path d="M0 4q4-3 7 0t9 0M0 9q4-3 7 0t9 0M0 14q4-3 7 0t9 0" stroke="#d4dce8" stroke-width="1.700"/></svg><span>Toolpath - 53.1K - T.NC - Program # 0</span></div>
            <div class="row"><i></i><i></i><i class="line"></i><i class="tee stop"></i><svg viewBox="0 0 16 16"><path d="M0 0h16v16H0z" fill="#bebebe"/><path d="m3 13 9-8M10 2l4 4-4 2zM3 9l4 4-5 1z" fill="#888" stroke="#888"/></svg><span>Coolant... - Off</span></div>
            <div class="row"><i></i><i></i><i class="tee stop"></i><svg viewBox="0 0 16 16"><path d="m1 1 14 7-14 7z" fill="#f00" stroke="#a00"/></svg><b class="insert"></b></div>
          </div>
        </section>

        <main class="view">
          <svg class="part" viewBox="327 134 1162 726" shape-rendering="crispEdges">
            <defs>
              <clipPath id="hole"><ellipse cx="936" cy="536.500" rx="79" ry="59"/></clipPath>
              <path id="pass" d="M597 618 672 375Q678 358 692 357L1303 465Q1322 470 1321 486L1247 731"/>
              <path id="lead" d="M597 618Q598 629 610 633L1214 735"/>
              <path id="turn" d="M1214 743Q1243 750 1247 731"/>
            </defs>

            <!-- passes that run behind the block -->
            <g class="path">
              <use href="#pass"/><use href="#pass" y="9"/><use href="#pass" y="18"/><use href="#pass" y="27"/><use href="#pass" y="36"/><use href="#pass" y="45"/><use href="#pass" y="54"/>
            </g>

            <path d="M695 370 1298 475 1224 718 620 615z" fill="url(#top)"/>
            <path d="m620 615 604 103v62L620 675z" fill="#62607a"/>
            <path d="m1298 475v60l-74 245v-62z" fill="#5f5d73"/>
            <path d="M695 370 1298 475 1224 718 620 615z" stroke="#fff"/>

            <ellipse cx="936" cy="536.500" rx="79" ry="59" fill="url(#wall)"/>
            <g clip-path="url(#hole)">
              <ellipse cx="936" cy="596.500" rx="79" ry="59" fill="#000"/>
              <g class="path">
                <ellipse cx="936" cy="541" rx="56" ry="44"/><ellipse cx="936" cy="550" rx="56" ry="44"/><ellipse cx="936" cy="559" rx="56" ry="44"/><ellipse cx="936" cy="568" rx="56" ry="44"/><ellipse cx="936" cy="577" rx="56" ry="44"/><ellipse cx="936" cy="586" rx="56" ry="44"/><ellipse cx="936" cy="595" rx="56" ry="44"/>
                <path d="M880.500 540v60M992.500 535v60M972.500 515v36h18"/>
              </g>
            </g>
            <ellipse cx="936" cy="536.500" rx="79" ry="59" stroke="#fff"/>

            <!-- front side of each pass -->
            <g class="path">
              <use href="#lead"/><use href="#lead" y="9"/><use href="#lead" y="18"/><use href="#lead" y="27"/><use href="#lead" y="36"/><use href="#lead" y="45"/><use href="#lead" y="54"/>
              <use href="#turn"/><use href="#turn" y="9"/><use href="#turn" y="18"/><use href="#turn" y="27"/><use href="#turn" y="36"/><use href="#turn" y="45"/>
              <path d="M1214 735q12 3 11 12M1223.500 718v32M1247 785q-3 15-20 14-20-3-21 11"/>
            </g>
            <g class="rapid">
              <path class="glow" d="M974.500 386v202M1204.500 597v213M1222.500 600v118"/>
              <path d="M975.500 386v202"/>
              <path d="M972.500 520V400L1205 597"/>
              <path d="M1205.500 597v213"/>
              <path d="M1223.500 600v118"/>
            </g>
            <path d="m609 612 20 4M620 606l-2 16M1212 776l24 6M1224 770l-1 17M1227 774l-8 10" stroke="#fff"/>
          </svg>
          <a class="watermark" href="#"><span>三维网</span>www.3dportal.cn</a>
        </main>
      </div>
    </div>
  </body>
</html>
```

FILE: styles.css
```css
body {
  margin: 0;
  font-family: "DejaVu Sans Condensed", "DejaVu Sans", sans-serif;
  font-size: 11px;
  background-color: #ece9d8;
}

h1,
h2 {
  margin: 0;
  font-size: 11px;
  font-weight: normal;
}

button,
input,
select {
  font: inherit;
  color: #000;
  margin: 0;
  padding: 0;
  border: none;
  border-radius: 0;
  background: none;
  box-sizing: border-box;
}

svg {
  display: block;
  flex: none;
  width: 16px;
  height: 16px;
  fill: none;
}

.sprite {
  position: absolute;
  width: 0;
  height: 0;
}

.app {
  display: flex;
  flex-direction: column;
  height: 100vh;
  overflow: hidden;
}

/* Title and menu */
.titlebar {
  display: flex;
  align-items: center;
  gap: 4px;
  height: 22px;
  box-sizing: border-box;
  padding-bottom: 4px;
  background: linear-gradient(#0052d8, #0058e8 50%, #0066fc 85%, #0042c0);
}

.titlebar h1 {
  font-family: Lato, sans-serif;
  font-size: 13px;
  font-weight: bold;
  color: #fff;
  text-shadow: 1px 1px #00309c;
  white-space: nowrap;
}

.menubar {
  display: flex;
  gap: 11px;
  height: 18px;
  padding: 0 4px 2px;
  border-bottom: 1px solid #aca899;
}

/* Toolbars */
.bar {
  display: flex;
  flex: none;
  box-sizing: border-box;
  height: 30px;
  border-top: 1px solid #fff;
  border-bottom: 1px solid #aca899;
}

.second,
.ribbon {
  align-self: flex-start;
  border-right: 1px solid #aca899;
}

.group {
  display: flex;
  align-items: center;
  padding: 0 4px 0 10px;
  border-right: 1px solid #aca899;
  box-shadow: inset 1px 0 #fff;
  background: linear-gradient(#f1efe4, #e7e3d0);
}

.group.first {
  padding-left: 7px;
}

.group.wide {
  padding-left: 10px;
}

.group.double {
  padding-left: 12px;
  border-left: 1px solid #aca899;
}

.group.last {
  flex: 1;
  margin-left: 6px;
  border-left: 1px solid #aca899;
}

.group.end {
  padding-right: 5px;
  border-right: none;
}

.group button,
.ops button {
  display: flex;
  flex: none;
  align-items: center;
  justify-content: center;
  width: 23px;
  height: 23px;
}

.sep {
  flex: none;
  width: 1px;
  height: 18px;
  margin: 0 3px 0 4px;
  background-color: #cbc7b6;
}

.group .dd,
.dd {
  flex: none;
  width: 13px;
  height: 20px;
  display: flex;
  align-items: center;
  justify-content: center;
}

.dd::after {
  content: "";
  border: 3px solid transparent;
  border-top-color: #000;
  border-bottom: none;
}

.dd.off::after {
  border-top-color: #c5c1b2;
}

/* Coordinate and selection ribbon */
.ribbon {
  height: 31px;
  background-color: #ffffcc;
}

.autocursor,
.selection,
.flats {
  display: flex;
  align-items: center;
}

.autocursor {
  padding: 0 7px 0 4px;
  border-right: 1px solid #aca899;
}

.autocursor > .flats {
  margin: 0 4px 0 8px;
}

.axis {
  width: 21px;
  height: 21px;
  margin-right: 5px;
  border: 1px solid #d0ccb8;
  border-radius: 3px;
  background-color: #f5f4ea;
}

.combo {
  display: flex;
  width: 72px;
  height: 21px;
  box-sizing: border-box;
  border: 1px solid #c9c7ba;
  background-color: #ece9d8;
}

.combo + .axis {
  margin-left: 12px;
}

.combo input {
  flex: 1;
  min-width: 0;
  padding-left: 2px;
}

.drop {
  display: flex;
  align-items: center;
  justify-content: center;
  width: 15px;
  background-color: #f0eee2;
}

.drop::after {
  content: "";
  width: 4px;
  height: 4px;
  margin-bottom: 3px;
  border: solid #c9c7ba;
  border-width: 0 2px 2px 0;
  transform: rotate(45deg);
}

.flats {
  gap: 3px;
}

.flats .dd {
  margin: 0 -1px;
}

.flat,
.plain,
.xp {
  display: flex;
  align-items: center;
  justify-content: center;
  width: 21px;
  height: 21px;
  background-color: #ece9d8;
}

.flat {
  border: 1px solid #dedac8;
}

.flat.dark {
  background-color: #aca899;
}

.flat .full-size {
  width: 20px;
  height: 20px;
}

.xp {
  border: 1px solid #1c4474;
  border-radius: 3px;
  background: linear-gradient(#fff, #ece9dc);
}

.xp.text {
  width: 46px;
  height: 21px;
}

.selection {
  gap: 9px;
  padding: 0 10px 0 7px;
  box-shadow: inset 2px 0 #fff;
}

.grip {
  width: 1px;
  height: 22px;
  margin-right: -2px;
  background-color: #aca899;
}

.pick {
  position: relative;
}

.pick select {
  display: block;
  appearance: none;
  width: 72px;
  height: 21px;
  padding-left: 4px;
  border: 1px solid #7f9db9;
  background-color: #fff;
}

.pick svg {
  position: absolute;
  top: 2px;
  right: 2px;
  height: 17px;
  background-color: #c3d3fb;
  pointer-events: none;
}

/* Work area */
.work {
  display: flex;
  flex: 1;
  min-height: 0;
}

.sidebar {
  flex: none;
  width: 28px;
  box-sizing: border-box;
  padding-top: 7px;
  border-right: 1px solid #aca899;
  background-color: #f4f3ee;
}

.tools {
  display: flex;
  flex-direction: column;
  align-items: center;
  padding: 11px 2px 3px 0;
  border-top: 1px solid #aca899;
  border-bottom: 1px solid #aca899;
  background: linear-gradient(to right, #f1efe4, #e7e3d0);
}

.tools button {
  display: flex;
  align-items: center;
  height: 22px;
}

.tools .sep {
  width: 20px;
  height: 1px;
  margin: 4px 0 3px;
}

.manager {
  display: flex;
  flex-direction: column;
  flex: none;
  width: 299px;
  box-sizing: border-box;
  border-right: 2px solid #aca899;
}

.caption {
  display: flex;
  align-items: center;
  gap: 7px;
  height: 19px;
  padding: 0 5px 0 4px;
  background-color: #d4d0c8;
}

.caption h2 {
  flex: 1;
}

.mini {
  width: 14px;
  height: 14px;
  border: 1px solid #1c4474;
  border-radius: 3px;
  background-color: #f4f3ee;
}

.mini svg {
  width: 12px;
  height: 12px;
}

.tabs {
  display: flex;
  align-items: flex-end;
  height: 20px;
  padding-left: 1px;
  border-bottom: 1px solid #919b9c;
}

.tab {
  height: 18px;
  padding: 0 5px;
  border: 1px solid #919b9c;
  border-bottom: none;
  border-radius: 3px 3px 0 0;
  background-color: #f7f6f0;
}

.tab.active {
  height: 20px;
  border-top: 2px solid #f0a030;
  background-color: #fcfcfe;
}

.ops {
  display: flex;
  align-items: center;
  height: 30px;
  margin: 2px 14px 0 3px;
  padding-left: 5px;
  border-top: 1px solid #aca899;
}

.ops + .ops {
  margin-top: 0;
}

.ops .sep {
  margin: 0 2px 0 3px;
  background-color: #aca899;
}

.ops .g1 {
  font-family: "Liberation Serif", serif;
  font-size: 14px;
  font-weight: bold;
  color: #aca899;
}

/* Operations tree */
.tree {
  flex: 1;
  margin: 6px 4px 0 5px;
  padding: 1px 0 0 3px;
  border: 1px solid #7f9db9;
  border-bottom: none;
  background-color: #fff;
  overflow: hidden;
}

.row {
  display: flex;
  align-items: center;
  height: 16px;
  white-space: nowrap;
}

.row span {
  margin-left: 5px;
}

.row i {
  flex: none;
  width: 19px;
  height: 16px;
  box-sizing: border-box;
  background: repeating-linear-gradient(#777 0 1px, transparent 1px 2px) 9px 0 / 1px 16px no-repeat;
}

.row i:first-child,
.row i:nth-child(2):not(.box) {
  background: none;
}

.row .tee {
  background: repeating-linear-gradient(#777 0 1px, transparent 1px 2px) 9px 0 / 1px 16px no-repeat, repeating-linear-gradient(to right, #777 0 1px, transparent 1px 2px) 9px 8px / 10px 1px no-repeat;
}

.row .stop {
  background-size: 1px 8px, 10px 1px;
}

.row .box {
  position: relative;
  background: repeating-linear-gradient(to right, #777 0 1px, transparent 1px 2px) 14px 8px / 5px 1px no-repeat;
}

.row .box::before {
  content: "";
  position: absolute;
  left: 5px;
  top: 4px;
  width: 7px;
  height: 7px;
  border: 1px solid #7f8f9f;
  background: linear-gradient(#000, #000) center / 5px 1px no-repeat, #f0eee6;
}

.row .plus::before {
  background: linear-gradient(#000, #000) center / 5px 1px no-repeat, linear-gradient(#000, #000) center / 1px 5px no-repeat, #f0eee6;
}

.insert {
  width: 166px;
  height: 16px;
  margin-left: 3px;
  background-color: #316ac5;
}

/* Graphics window */
.view {
  position: relative;
  flex: 1;
  min-width: 0;
  background-color: #000;
}

.part {
  width: 100%;
  height: 100%;
}

.path {
  stroke: #2fe0e0;
}

.rapid {
  stroke: #f4f432;
}

.rapid .glow {
  opacity: 0.4;
}

.watermark {
  position: absolute;
  right: 17px;
  bottom: 4px;
  display: flex;
  align-items: center;
  height: 20px;
  font-family: "DejaVu Sans", "Noto Sans CJK SC", sans-serif;
  font-size: 15px;
  font-weight: bold;
  color: #fff;
  text-decoration: none;
  -webkit-text-stroke: 2px #d83c3c;
  paint-order: stroke fill;
}

.watermark span {
  font-size: 20px;
}
```
